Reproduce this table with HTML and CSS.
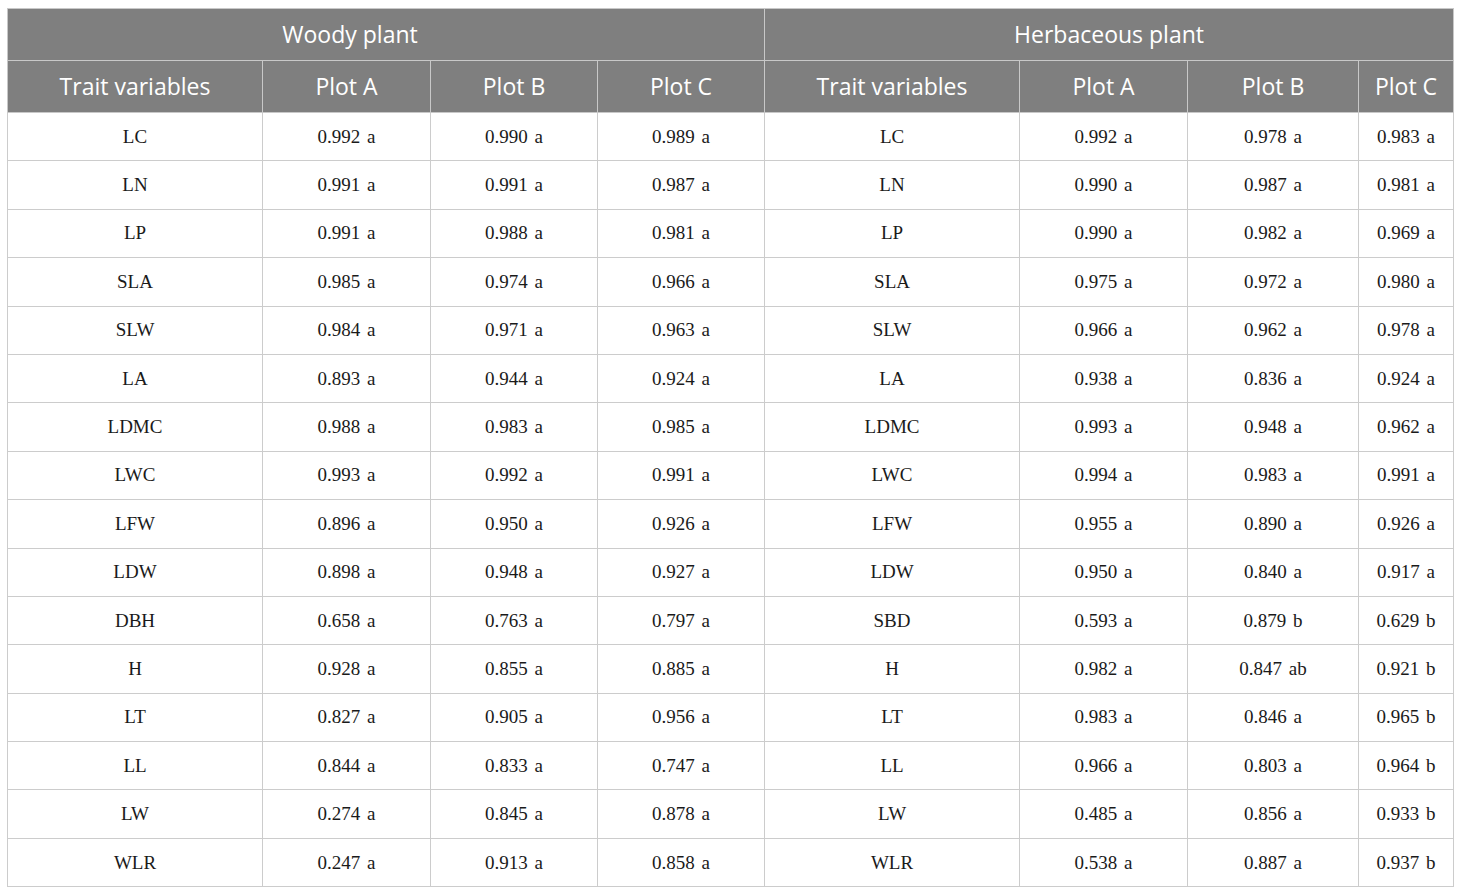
FILE: index.html
```html
<!DOCTYPE html>
<html>
<head>
<meta charset="utf-8">
<link rel="stylesheet" href="styles.css">
</head>
<body>
<table class="data">
  <colgroup>
    <col class="c-trait"><col class="c-a"><col class="c-b"><col class="c-c">
    <col class="c-trait"><col class="c-a"><col class="c-b2"><col class="c-c2">
  </colgroup>
  <thead>
    <tr class="group">
      <th colspan="4" class="woody">Woody plant</th>
      <th colspan="4">Herbaceous plant</th>
    </tr>
    <tr class="cols">
      <th>Trait variables</th><th>Plot A</th><th>Plot B</th><th>Plot C</th>
      <th>Trait variables</th><th>Plot A</th><th>Plot B</th><th>Plot C</th>
    </tr>
  </thead>
  <tbody>
    <tr><td>LC</td><td>0.992 a</td><td>0.990 a</td><td>0.989 a</td><td>LC</td><td>0.992 a</td><td>0.978 a</td><td>0.983 a</td></tr>
    <tr><td>LN</td><td>0.991 a</td><td>0.991 a</td><td>0.987 a</td><td>LN</td><td>0.990 a</td><td>0.987 a</td><td>0.981 a</td></tr>
    <tr><td>LP</td><td>0.991 a</td><td>0.988 a</td><td>0.981 a</td><td>LP</td><td>0.990 a</td><td>0.982 a</td><td>0.969 a</td></tr>
    <tr><td>SLA</td><td>0.985 a</td><td>0.974 a</td><td>0.966 a</td><td>SLA</td><td>0.975 a</td><td>0.972 a</td><td>0.980 a</td></tr>
    <tr><td>SLW</td><td>0.984 a</td><td>0.971 a</td><td>0.963 a</td><td>SLW</td><td>0.966 a</td><td>0.962 a</td><td>0.978 a</td></tr>
    <tr><td>LA</td><td>0.893 a</td><td>0.944 a</td><td>0.924 a</td><td>LA</td><td>0.938 a</td><td>0.836 a</td><td>0.924 a</td></tr>
    <tr><td>LDMC</td><td>0.988 a</td><td>0.983 a</td><td>0.985 a</td><td>LDMC</td><td>0.993 a</td><td>0.948 a</td><td>0.962 a</td></tr>
    <tr><td>LWC</td><td>0.993 a</td><td>0.992 a</td><td>0.991 a</td><td>LWC</td><td>0.994 a</td><td>0.983 a</td><td>0.991 a</td></tr>
    <tr><td>LFW</td><td>0.896 a</td><td>0.950 a</td><td>0.926 a</td><td>LFW</td><td>0.955 a</td><td>0.890 a</td><td>0.926 a</td></tr>
    <tr><td>LDW</td><td>0.898 a</td><td>0.948 a</td><td>0.927 a</td><td>LDW</td><td>0.950 a</td><td>0.840 a</td><td>0.917 a</td></tr>
    <tr><td>DBH</td><td>0.658 a</td><td>0.763 a</td><td>0.797 a</td><td>SBD</td><td>0.593 a</td><td>0.879 b</td><td>0.629 b</td></tr>
    <tr><td>H</td><td>0.928 a</td><td>0.855 a</td><td>0.885 a</td><td>H</td><td>0.982 a</td><td>0.847 ab</td><td>0.921 b</td></tr>
    <tr><td>LT</td><td>0.827 a</td><td>0.905 a</td><td>0.956 a</td><td>LT</td><td>0.983 a</td><td>0.846 a</td><td>0.965 b</td></tr>
    <tr><td>LL</td><td>0.844 a</td><td>0.833 a</td><td>0.747 a</td><td>LL</td><td>0.966 a</td><td>0.803 a</td><td>0.964 b</td></tr>
    <tr><td>LW</td><td>0.274 a</td><td>0.845 a</td><td>0.878 a</td><td>LW</td><td>0.485 a</td><td>0.856 a</td><td>0.933 b</td></tr>
    <tr><td>WLR</td><td>0.247 a</td><td>0.913 a</td><td>0.858 a</td><td>WLR</td><td>0.538 a</td><td>0.887 a</td><td>0.937 b</td></tr>
  </tbody>
</table>
</body>
</html>
```
FILE: styles.css
```css
html, body {
  margin: 0;
  background: #ffffff;
}
body {
  padding: 8px 7px;
}
.data {
  border-collapse: collapse;
  table-layout: fixed;
  width: 1446px;
}
.c-trait { width: 255px; }
.c-a { width: 168px; }
.c-b { width: 167px; }
.c-c { width: 167px; }
.c-b2 { width: 171px; }
.c-c2 { width: 95px; }
.data th {
  background: #7f7f7f;
  color: #ffffff;
  font-family: "Open Sans", "Noto Sans", sans-serif;
  font-weight: 400;
  font-size: 23px;
  height: 49px;
  padding: 0 0 2px 0;
  border: 1px solid #c8c8c8;
  text-align: center;
  vertical-align: middle;
}
.data th.woody {
  padding-right: 72px;
}
.data td {
  font-family: "Liberation Serif", "Times New Roman", serif;
  font-size: 19px;
  word-spacing: 2px;
  color: #1a1a1a;
  height: 47.4px;
  padding: 0;
  border: 1px solid #cccccc;
  text-align: center;
  vertical-align: middle;
}
```
